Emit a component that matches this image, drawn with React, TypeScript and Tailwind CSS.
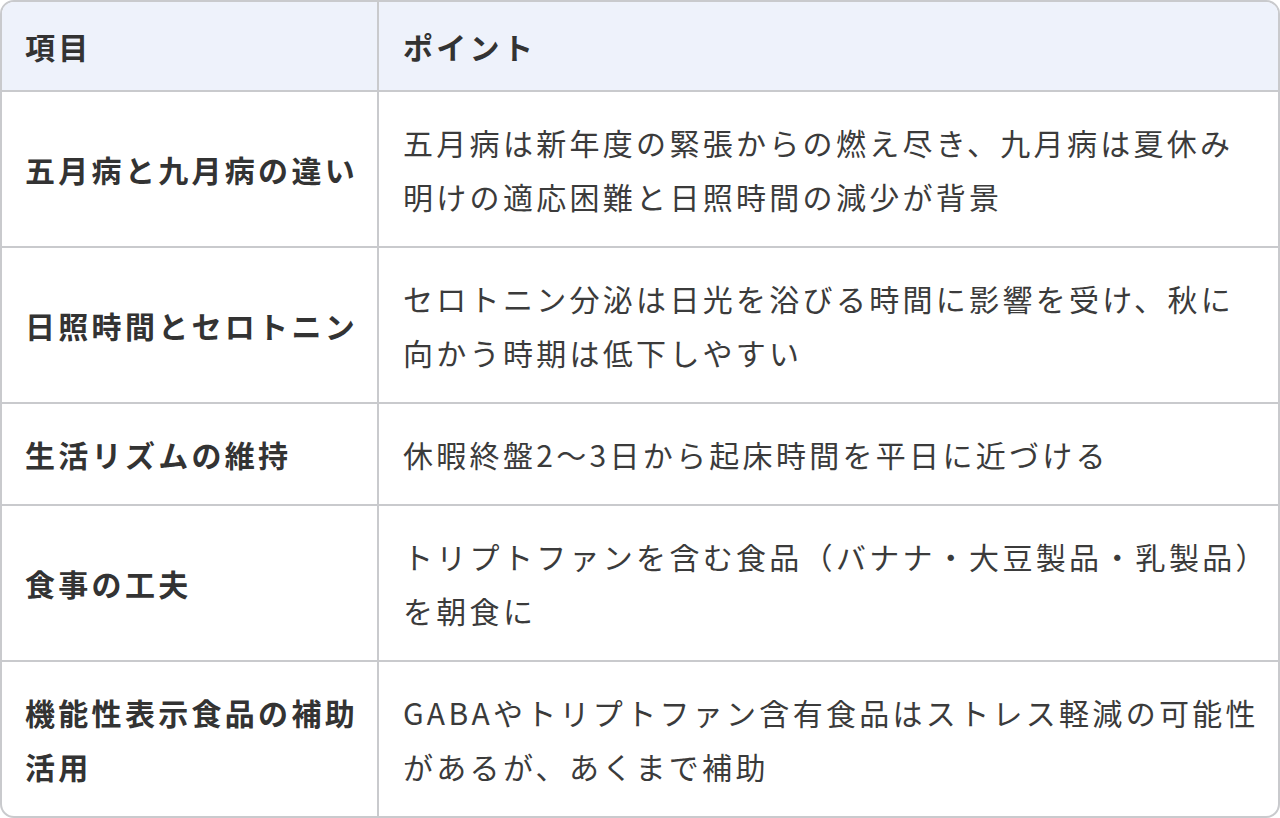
import React from "react";

const rows: [string, string][] = [
  ["五月病と九月病の違い", "五月病は新年度の緊張からの燃え尽き、九月病は夏休み\n明けの適応困難と日照時間の減少が背景"],
  ["日照時間とセロトニン", "セロトニン分泌は日光を浴びる時間に影響を受け、秋に\n向かう時期は低下しやすい"],
  ["生活リズムの維持", "休暇終盤2〜3日から起床時間を平日に近づける"],
  ["食事の工夫", "トリプトファンを含む食品（バナナ・大豆製品・乳製品）を朝食に"],
  ["機能性表示食品の補助活用", "GABAやトリプトファン含有食品はストレス軽減の可能性があるが、あくまで補助"],
];

export default function App() {
  return (
    <div
      className="w-[1280px] h-[818px] bg-white"
      style={{ fontFamily: '"Noto Sans CJK JP", "Noto Sans", sans-serif' }}
    >
      <div className="w-full border-2 border-[#c9cacd] rounded-[14px] overflow-hidden text-[30px] leading-[54px] tracking-[0.11em] text-[#3b3b3b]">
        <div className="flex bg-[#eef2fb]">
          <div className="w-[377px] shrink-0 border-r-2 border-[#c9cacd] pl-[23px] pr-[6px] py-[17px] font-bold text-[#333]">
            項目
          </div>
          <div className="flex-1 pl-[24px] pr-[2px] py-[17px] font-bold text-[#333]">ポイント</div>
        </div>
        {rows.map(([k, v], i) => (
          <div key={i} className="flex border-t-2 border-[#c9cacd]">
            <div className="w-[377px] shrink-0 border-r-2 border-[#c9cacd] pl-[23px] pr-[6px] py-[23px] font-bold text-[#333] flex items-center">
              <span>{k}</span>
            </div>
            <div className="flex-1 pl-[24px] pr-[2px] py-[23px] flex items-center">
              <span className="whitespace-pre-line">{v}</span>
            </div>
          </div>
        ))}
      </div>
    </div>
  );
}
